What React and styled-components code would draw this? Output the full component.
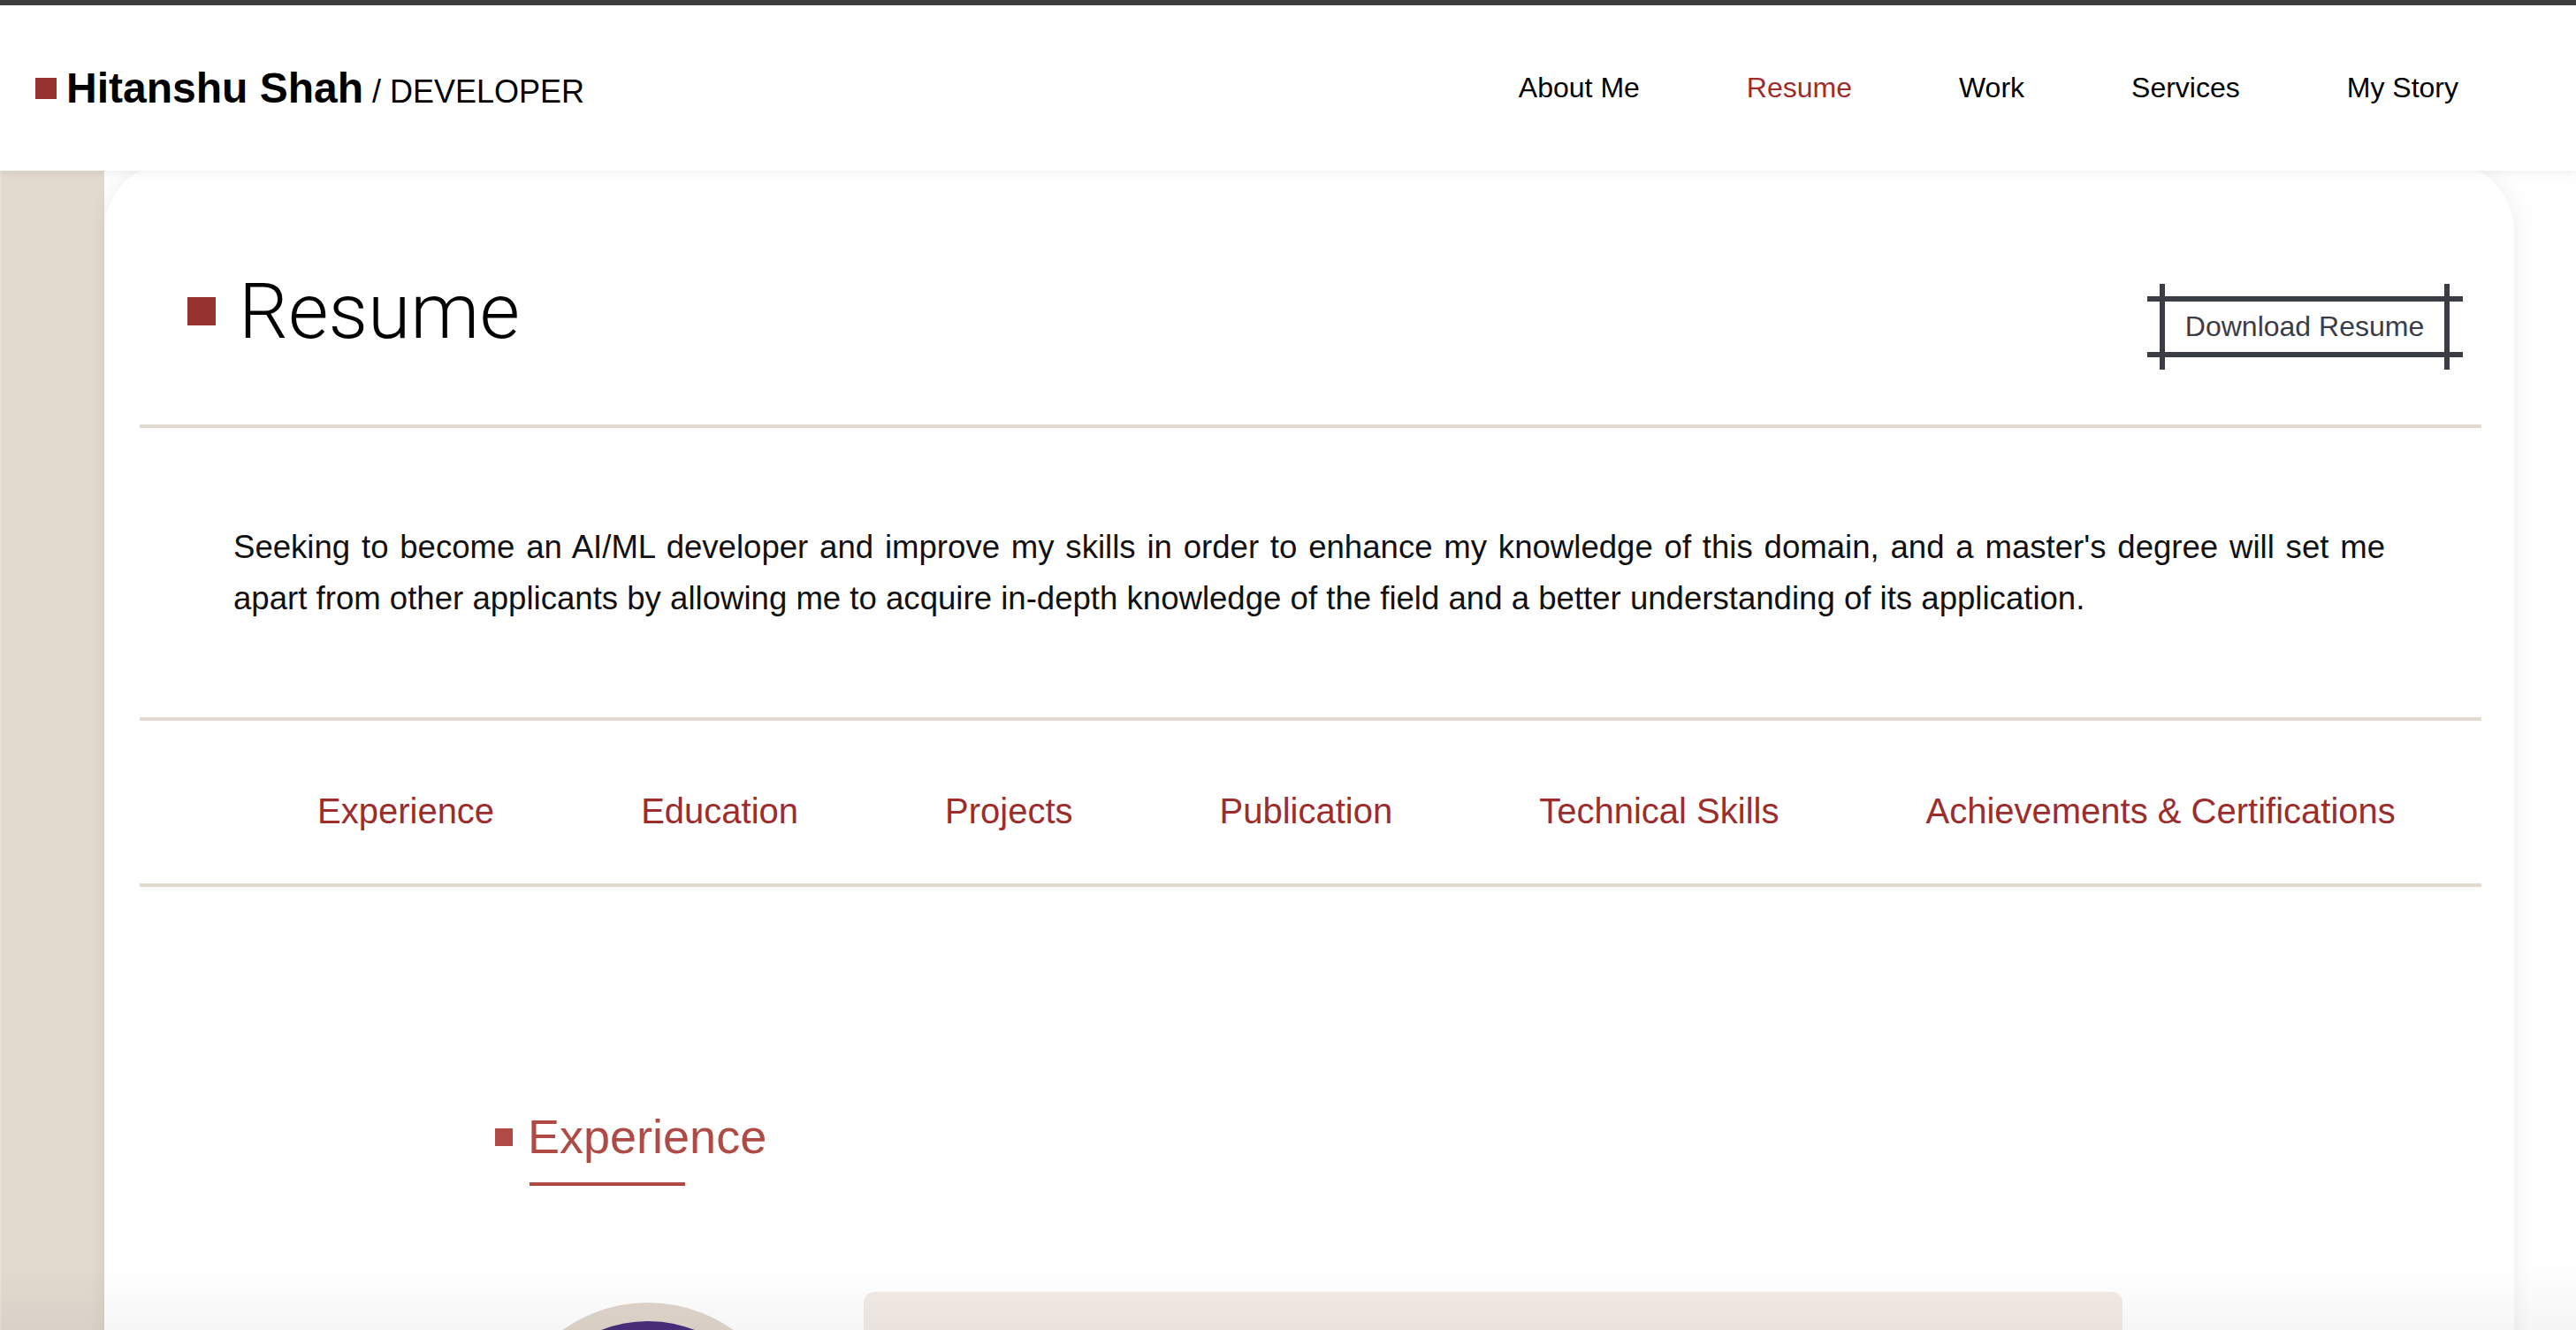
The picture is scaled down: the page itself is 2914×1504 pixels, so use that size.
import styled, { createGlobalStyle } from "styled-components";

const GlobalStyle = createGlobalStyle`
  html, body {
    margin: 0;
    padding: 0;
    background: #fefefe;
    font-family: "Liberation Sans", Arial, Helvetica, sans-serif;
  }
  * {
    box-sizing: border-box;
  }
`;

const navItems = ["About Me", "Resume", "Work", "Services", "My Story"];
const tabs = [
  "Experience",
  "Education",
  "Projects",
  "Publication",
  "Technical Skills",
  "Achievements & Certifications",
];

const App = () => {
  return (
    <>
      <GlobalStyle />
      <Shell>
        <Header>
          <Brand>
            <Mark size={24} />
            <BrandText>
              <Name>Hitanshu Shah</Name>
              <Role>/ DEVELOPER</Role>
            </BrandText>
          </Brand>
          <Nav>
            {navItems.map(item => (
              <NavLink key={item} $active={item === "Resume"}>
                {item}
              </NavLink>
            ))}
          </Nav>
        </Header>

        <Main>
          <Stripe />
          <Card>
            <TitleRow>
              <Title>
                <Mark size={32} />
                <h1>Resume</h1>
              </Title>
              <DownloadButton>Download Resume</DownloadButton>
            </TitleRow>
            <Divider />
            <Objective>
              Seeking to become an AI/ML developer and improve my skills in
              order to enhance my knowledge of this domain, and a master's
              degree will set me apart from other applicants by allowing me to
              acquire in-depth knowledge of the field and a better
              understanding of its application.
            </Objective>
            <Divider />
            <Tabs>
              {tabs.map(tab => (
                <Tab key={tab}>{tab}</Tab>
              ))}
            </Tabs>
            <Divider />
            <Section>
              <SectionHeading>
                <SectionMark />
                <HeadingStack>
                  <h2>Experience</h2>
                  <Underline />
                </HeadingStack>
              </SectionHeading>
              <TimelineRow>
                <LogoCircle />
                <ExperienceCard />
              </TimelineRow>
            </Section>
          </Card>
          <Gutter />
        </Main>
        <BottomFade />
      </Shell>
    </>
  );
};
export default App;

const Shell = styled.div`
  height: 100vh;
  display: flex;
  flex-direction: column;
  overflow: hidden;
`;

const Header = styled.header`
  position: relative;
  z-index: 2;
  height: 193px;
  flex-shrink: 0;
  border-top: 6px solid #3d3d3d;
  background: #fff;
  box-shadow: 0 3px 8px rgba(0, 0, 0, 0.06);
  display: flex;
  align-items: center;
  justify-content: space-between;
  padding: 0 133px 0 40px;
`;

const Brand = styled.div`
  display: flex;
  align-items: center;
  gap: 11px;
`;

const Mark = styled.span`
  display: block;
  flex-shrink: 0;
  width: ${p => p.size}px;
  height: ${p => p.size}px;
  background: #963330;
`;

const BrandText = styled.div`
  color: #000;
  white-space: nowrap;
  line-height: 1;
`;

const Name = styled.span`
  font-size: 48px;
  font-weight: 700;
`;

const Role = styled.span`
  font-size: 36px;
  font-weight: 400;
  margin-left: 10px;
`;

const Nav = styled.nav`
  display: flex;
  gap: 121px;
`;

const NavLink = styled.a`
  font-size: 32px;
  color: ${p => (p.$active ? "#9b2d2d" : "#000")};
  cursor: pointer;
`;

const Main = styled.main`
  flex: 1;
  display: grid;
  grid-template-columns: 118px 1fr 70px;
  margin-top: -10px;
  min-height: 0;
`;

const Stripe = styled.div`
  background: #e2d9cf;
  border-left: 2px solid #e8e0d7;
`;

const Gutter = styled.div`
  background: #fefefe;
`;

const Card = styled.div`
  position: relative;
  z-index: 1;
  background: #fff;
  border-radius: 78px 78px 0 0;
  box-shadow: 0 0 22px rgba(0, 0, 0, 0.07);
  padding: 126px 37px 0 40px;
`;

const TitleRow = styled.div`
  display: flex;
  justify-content: space-between;
  align-items: flex-start;
  padding: 0 36px 62px 54px;

  h1 {
    margin: 0;
    font-family: Roboto, "Liberation Sans", sans-serif;
    font-size: 88px;
    font-weight: 300;
    line-height: 85px;
    color: #000;
  }
`;

const Title = styled.div`
  display: flex;
  align-items: center;
  gap: 26px;
`;

const DownloadButton = styled.button`
  position: relative;
  margin-top: 12px;
  width: 328px;
  height: 97px;
  background: #fff;
  border: none;
  border-left: 6px solid #3a3d46;
  border-right: 6px solid #3a3d46;
  color: #3a3d46;
  font-family: "Liberation Sans", Arial, sans-serif;
  font-size: 32px;
  cursor: pointer;
  padding: 0;

  &::before,
  &::after {
    content: "";
    position: absolute;
    left: -20px;
    right: -21px;
    height: 6px;
    background: #3a3d46;
  }
  &::before {
    top: 14px;
  }
  &::after {
    bottom: 14px;
  }
`;

const Divider = styled.div`
  height: 4px;
  background: #e2d9cf;
`;

const Objective = styled.p`
  margin: 0;
  padding: 106px 109px 106px 106px;
  font-size: 36.6px;
  line-height: 57.6px;
  text-align: justify;
  color: #111;
`;

const Tabs = styled.div`
  display: flex;
  gap: 166px;
  padding: 79px 0 59px 201px;
`;

const Tab = styled.a`
  font-size: 40px;
  line-height: 46px;
  color: #9b2d2d;
  white-space: nowrap;
  cursor: pointer;
`;

const Section = styled.section`
  padding: 255px 0 0 402px;
`;

const SectionHeading = styled.div`
  display: flex;
  align-items: flex-start;
  gap: 17px;
`;

const SectionMark = styled.span`
  width: 20px;
  height: 20px;
  margin-top: 18px;
  background: #b04a45;
`;

const HeadingStack = styled.div`
  display: flex;
  flex-direction: column;

  h2 {
    margin: 0;
    font-size: 54px;
    font-weight: 400;
    line-height: 54px;
    color: #b04a45;
  }
`;

const Underline = styled.span`
  width: 176px;
  height: 4px;
  margin: 25px 0 0 2px;
  background: #b04a45;
`;

const TimelineRow = styled.div`
  display: flex;
  align-items: flex-start;
  gap: 78px;
  margin: 120px 0 0 7px;
`;

const LogoCircle = styled.div`
  width: 332px;
  height: 332px;
  margin-top: 12px;
  border-radius: 50%;
  background: #4a2f7c;
  border: 21px solid #e0d6cc;
  flex-shrink: 0;
`;

const ExperienceCard = styled.div`
  width: 1424px;
  height: 420px;
  border-radius: 12px;
  background: #f2ebe6;
`;

const BottomFade = styled.div`
  position: fixed;
  left: 0;
  right: 0;
  bottom: 0;
  height: 70px;
  z-index: 3;
  pointer-events: none;
  background: linear-gradient(
    to bottom,
    rgba(0, 0, 0, 0),
    rgba(0, 0, 0, 0.035)
  );
`;
